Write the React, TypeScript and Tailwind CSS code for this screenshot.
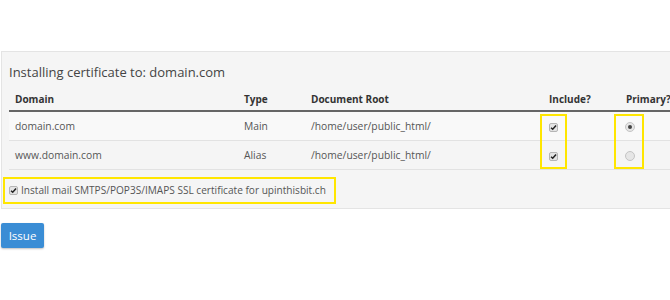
import React from 'react'

const font = { fontFamily: '"Open Sans", "Liberation Sans", sans-serif' }

function Check() {
  return (
    <span className="inline-flex w-[9px] h-[9px] shrink-0 items-center justify-center rounded-[2px] border border-[#b5b5b5] bg-[#e4e4e4]">
      <svg width="7" height="7" viewBox="0 0 8 8">
        <path d="M1.2 4.2 L3.1 6 L6.9 1.6" fill="none" stroke="#222" strokeWidth="1.7" />
      </svg>
    </span>
  )
}

function Radio({ on }: { on?: boolean }) {
  return (
    <span className="inline-flex w-[10px] h-[10px] items-center justify-center rounded-full border border-[#c4c4c4] bg-[#e6e6e6]">
      {on && <span className="w-[4px] h-[4px] rounded-full bg-[#444]" />}
    </span>
  )
}

const rows = [
  { domain: 'domain.com', type: 'Main', root: '/home/user/public_html/', primary: true, bg: 'bg-[#f9f9f9]' },
  { domain: 'www.domain.com', type: 'Alias', root: '/home/user/public_html/', primary: false, bg: 'bg-[#f5f5f5]' },
]

export default function App() {
  return (
    <div className="w-[670px] h-[300px] overflow-hidden bg-white pt-[51px] text-[#555]" style={font}>
      <div className="relative ml-px w-[720px] border border-[#e4e4e4] bg-[#f5f5f5] px-[7px] pb-[4px]">
        <div className="pt-[10px] text-[13px] leading-[20px] text-[#444]">
          Installing certificate to: domain.com
        </div>

        <div className="flex border-b-2 border-[#666] pt-[10px] pb-[4px] text-[10px] leading-[14px] font-bold text-[#333]">
          <div className="w-[229px] pl-[6px]">Domain</div>
          <div className="w-[67px] pl-[6px]">Type</div>
          <div className="w-[238px] pl-[6px]">Document Root</div>
          <div className="w-[77px] pl-[6px]">Include?</div>
          <div className="w-[60px] pl-[6px] whitespace-nowrap">Primary?</div>
        </div>

        {rows.map((r) => (
          <div key={r.domain} className={`flex h-[29px] items-center border-b border-[#e2e2e2] pt-[2px] text-[10.3px] ${r.bg}`}>
            <div className="w-[229px] pl-[6px]">{r.domain}</div>
            <div className="w-[67px] pl-[6px]">{r.type}</div>
            <div className="w-[238px] pl-[6px]">{r.root}</div>
            <div className="flex w-[77px] pl-[6px]">
              <Check />
            </div>
            <div className="flex w-[77px] pl-[5px]">
              <Radio on={r.primary} />
            </div>
          </div>
        ))}

        <div className="-ml-[6px] mt-[7px] flex h-[27px] w-[333px] items-center gap-[3px] border-2 border-[#ffe600] pl-[4px] text-[10.1px]">
          <Check />
          <span className="whitespace-nowrap">Install mail SMTPS/POP3S/IMAPS SSL certificate for upinthisbit.ch</span>
        </div>

        <div className="absolute left-[538px] top-[62px] h-[55px] w-[27px] border-2 border-[#ffe600]" />
        <div className="absolute left-[612px] top-[62px] h-[55px] w-[30px] border-2 border-[#ffe600]" />
      </div>

      <button className="ml-px mt-[14px] h-[25px] w-[43px] rounded-[2px] bg-[#3a8dd5] text-[11.5px] text-white shadow-[0_1px_2px_rgba(0,0,0,0.25)]">
        Issue
      </button>
    </div>
  )
}
